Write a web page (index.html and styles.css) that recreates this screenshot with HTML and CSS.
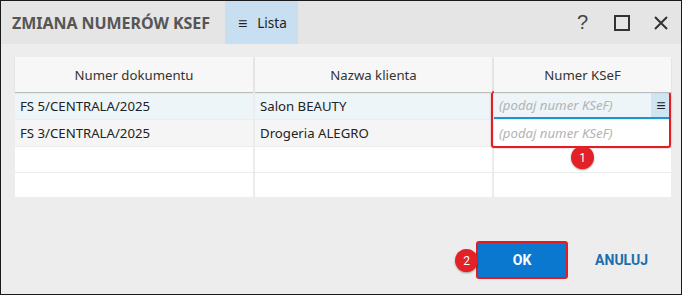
FILE: index.html
```html
<!DOCTYPE html>
<html lang="pl">
<head>
<meta charset="utf-8">
<link rel="stylesheet" href="styles.css">
</head>
<body>
<div class="window">
  <header class="titlebar">
    <div class="title">ZMIANA NUMERÓW KSEF</div>
    <div class="tab"><span class="tab-icon">≡</span><span>Lista</span></div>
    <div class="controls">
      <span class="ctl help">?</span>
      <span class="ctl"><svg width="16" height="16" viewBox="0 0 16 16"><rect x="1" y="1" width="14" height="14" fill="none" stroke="#333" stroke-width="2"/></svg></span>
      <span class="ctl"><svg width="16" height="16" viewBox="0 0 16 16"><path d="M2 2L14 14M14 2L2 14" stroke="#333" stroke-width="2" fill="none"/></svg></span>
    </div>
  </header>
  <main class="content">
    <div class="grid">
      <div class="th">Numer dokumentu</div>
      <div class="th">Nazwa klienta</div>
      <div class="th">Numer KSeF</div>

      <div class="td sel">FS 5/CENTRALA/2025</div>
      <div class="td sel">Salon BEAUTY</div>
      <div class="td edit"><span class="ph">(podaj numer KSeF)</span><span class="menu">≡</span></div>

      <div class="td alt">FS 3/CENTRALA/2025</div>
      <div class="td alt">Drogeria ALEGRO</div>
      <div class="td blank"><span class="ph">(podaj numer KSeF)</span></div>

      <div class="td r3"></div><div class="td r3"></div><div class="td r3"></div>
      <div class="td r4"></div><div class="td r4"></div><div class="td r4"></div>
    </div>
    <div class="highlight"></div>
    <div class="badge b1">1</div>
    <footer class="actions">
      <div class="ok-wrap">
        <div class="badge b2">2</div>
        <button class="ok">OK</button>
      </div>
      <button class="cancel">ANULUJ</button>
    </footer>
  </main>
</div>
</body>
</html>
```

FILE: styles.css
```css
* { box-sizing: border-box; }
body {
  margin: 0;
  font-family: "Noto Sans", "Open Sans", sans-serif;
  color: #222;
}
.window {
  width: 682px;
  height: 295px;
  border: 1px solid #1a1a1a;
  background: #ededed;
  display: flex;
  flex-direction: column;
}
.titlebar {
  height: 43px;
  background: #e5e5e5;
  display: flex;
  align-items: stretch;
  flex-shrink: 0;
}
.title {
  padding-left: 11px;
  font-weight: 700;
  font-size: 16px;
  color: #565656;
  display: flex;
  align-items: center;
  letter-spacing: -0.05px;
}
.tab {
  margin-left: 15px;
  width: 73px;
  background: #c7dff0;
  display: flex;
  align-items: center;
  gap: 10px;
  padding-left: 13px;
  font-size: 13.5px;
  color: #222;
}
.tab-icon { font-size: 16px; }
.controls {
  margin-left: auto;
  display: flex;
  align-items: center;
  gap: 22px;
  padding-right: 12px;
}
.ctl {
  width: 17px;
  display: flex;
  justify-content: center;
  color: #444;
}
.help { font-size: 20px; font-family: "Liberation Sans", sans-serif; }
.content {
  position: relative;
  flex: 1;
  padding: 13px 11px 0 14px;
  display: flex;
  flex-direction: column;
}
.grid {
  display: grid;
  grid-template-columns: 238px 237px 177px;
  grid-template-rows: 35px 26px 26px 25px 24px;
  column-gap: 2px;
  row-gap: 1px;
  background: #ececec;
  font-size: 13.2px;
}
.th {
  background: #f7f7f7;
  display: flex;
  align-items: center;
  justify-content: center;
  color: #333;
  box-shadow: 0 1px 1px #bdbdbd;
  position: relative;
  z-index: 1;
}
.td {
  display: flex;
  align-items: center;
  padding-left: 5px;
  color: #222;
}
.sel { background: #edf5f9; }
.alt { background: #f5f5f5; }
.r3, .r4 { background: #fff; }
.edit {
  background: #edf5f9;
  border-bottom: 2px solid #1e93d6;
  padding-right: 0;
  justify-content: space-between;
}
.blank { background: #fff; }
.ph { font-style: italic; color: #b3b3b3; }
.menu {
  width: 20px;
  align-self: stretch;
  background: #cfe5f2;
  display: flex;
  align-items: center;
  justify-content: center;
  color: #222;
  font-style: normal;
  font-size: 16px;
}
.highlight {
  position: absolute;
  left: 490px;
  top: 47px;
  width: 180px;
  height: 57px;
  border: 2px solid #e31b23;
  border-radius: 3px;
  box-shadow: 0 0 2px rgba(200,0,0,.4);
  pointer-events: none;
}
.badge {
  position: absolute;
  width: 23px;
  height: 23px;
  border-radius: 50%;
  background: #e32228;
  color: #fff;
  font-size: 12px;
  display: flex;
  align-items: center;
  justify-content: center;
  box-shadow: 0 1px 2px rgba(0,0,0,.35);
  font-family: "Roboto", sans-serif;
}
.b1 { left: 570px; top: 102px; }
.actions {
  margin-top: auto;
  margin-bottom: 15px;
  display: flex;
  align-items: center;
  justify-content: flex-end;
  gap: 27px;
  padding-right: 22px;
}
.ok-wrap { position: relative; }
.b2 { left: -21px; top: 8px; z-index: 2; }
.ok {
  width: 92px;
  height: 38px;
  background: #0b78d0;
  border: 2px solid #e31b23;
  border-radius: 3px;
  color: #fff;
  font-weight: 700;
  font-size: 14px;
  font-family: "Roboto", sans-serif;
}
.cancel {
  background: none;
  border: 0;
  padding: 0;
  color: #1b6dae;
  font-weight: 700;
  font-size: 14px;
  font-family: "Roboto", sans-serif;
}
```
